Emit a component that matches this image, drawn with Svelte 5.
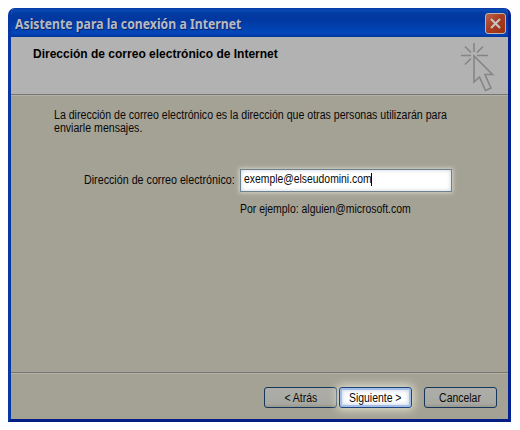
<script>
  let email = $state('exemple@elseudomini.com');
</script>

<main>
  <section class="window">
    <header class="titlebar">
      <h1><span class="t title">Asistente para la conexión a Internet</span></h1>
      <button class="close" aria-label="Cerrar">
        <svg width="11" height="11" viewBox="0 0 11 11"><path d="M1 1L10 10M10 1L1 10" stroke="#c9c5c2" stroke-width="2.1" /></svg>
      </button>
    </header>
    <div class="banner">
      <h2><span class="t head">Dirección de correo electrónico de Internet</span></h2>
      <svg class="pointer" width="36" height="52" viewBox="0 0 36 52" fill="none" stroke="#858585" stroke-width="1.6">
        <path d="M14 1V10M1 13.500H11M17 13.500H28M5 4.500L11 10.500M23 4.500L17 10.500M5 22.500L11 16.500" />
        <path d="M14 14V40L19.500 35L25.500 48.500L31 46L25 32.500H32.500Z" />
      </svg>
    </div>
    <div class="body">
      <p class="intro">
        <span class="t line1">La dirección de correo electrónico es la dirección que otras personas utilizarán para</span>
        <span class="t line2">enviarle mensajes.</span>
      </p>
      <div class="field">
        <span class="label"><span class="t lab">Dirección de correo electrónico:</span></span>
        <div class="input"><span class="t mail">{email}</span><i></i></div>
      </div>
      <p class="hint"><span class="t hi">Por ejemplo: alguien@microsoft.com</span></p>
    </div>
    <footer>
      <button class="btn"><span class="t">&lt; Atrás</span></button>
      <button class="btn active"><span class="t">Siguiente &gt;</span></button>
      <button class="btn cancel"><span class="t">Cancelar</span></button>
    </footer>
  </section>
</main>

<style>
  :global(body) { margin: 0; background: #fefefe; }
  main { box-sizing: border-box; width: 520px; height: 430px; padding: 8px; font: 12px/13px "Liberation Sans", Arial, sans-serif; color: #080808; }
  h1, h2, p { margin: 0; }
  .window { box-sizing: border-box; width: 503px; height: 414px; display: flex; flex-direction: column; border: 3px solid #0637a4; border-top: 0; border-bottom-color: #021d85; border-right-color: #022294; border-radius: 7px 7px 0 0; background: #a4a295; overflow: hidden; }
  .titlebar { height: 29px; margin: 0 -3px; padding: 0 5px 0 7px; box-sizing: border-box; flex: none; display: flex; justify-content: space-between; align-items: center; background: linear-gradient(#0636a0 0, #0a4bb8 2px, #043ba3 5px, #0138a0 12px, #0142b1 20px, #0147bb 25px, #01359c 29px); }
  .t { display: inline-block; white-space: nowrap; transform-origin: 0 50%; transform: scaleX(.883); }
  h1 { font: bold 14px/18px "Noto Sans", "Open Sans", sans-serif; color: #b6bac4; text-shadow: 1px 1px #092264; padding-top: 3px; }
  .title { transform: scaleX(.875); }
  .close { width: 21px; height: 21px; margin-top: 1px; padding: 0; display: grid; place-items: center; border: 1px solid #b8b3b5; border-radius: 3px; background: linear-gradient(135deg, #bb6450, #a83c22 45%, #99300f); }
  .banner { height: 58px; flex: none; box-sizing: border-box; padding: 5px 12px 0 22px; display: flex; justify-content: space-between; background: #b2b2b2; border-bottom: 1px solid #77766f; box-shadow: 0 1px #b4b2a8; position: relative; }
  h2 { font-size: 12px; line-height: 14px; padding-top: 5px; color: #000; }
  .head { transform: none; }
  .body { flex: 1; padding: 14px 0 0 43px; }
  .intro .t { display: block; }
  .field { display: flex; align-items: center; margin: 34px 0 0 30px; }
  .label { width: 156px; }
  .lab { transform: scaleX(.893); }
  .input { box-sizing: border-box; width: 212px; height: 23px; padding: 0 2.5px 2px; display: flex; align-items: center; background: #fff; border: 1px solid #6d8291; box-shadow: 0 0 4px 1px #d3d3ca, inset 0 0 4px #c9ced3; position: relative; }
  .mail { transform: scaleX(.865); }
  .input i { position: absolute; left: 130px; top: 3px; width: 1px; height: 13px; background: #000; }
  .hint { margin: 11px 0 0 186px; }
  .hi { transform: scaleX(.87); }
  footer { height: 47px; flex: none; box-sizing: border-box; padding: 14px 11px 0; display: flex; justify-content: flex-end; align-items: flex-start; border-top: 1px solid #78766e; box-shadow: inset 0 1px #b3b1a7; }
  .btn { width: 73px; height: 21px; padding: 1px 0 0; margin-right: 2px; border: 1px solid #16365c; border-radius: 3px; background: linear-gradient(#aeaea9, #a9a9a3 80%, #98978e); font: inherit; color: #080808; }
  .btn .t { transform-origin: 50% 50%; transform: scaleX(.87); }
  .active { background: #fff; border-color: #1f437b; box-shadow: inset 0 0 0 2px #a4bde9, inset 0 0 5px 2px #c0cde0, 0 0 8px 2px #e0dfcc; }
  .cancel { margin: 0 0 0 10px; }
</style>
